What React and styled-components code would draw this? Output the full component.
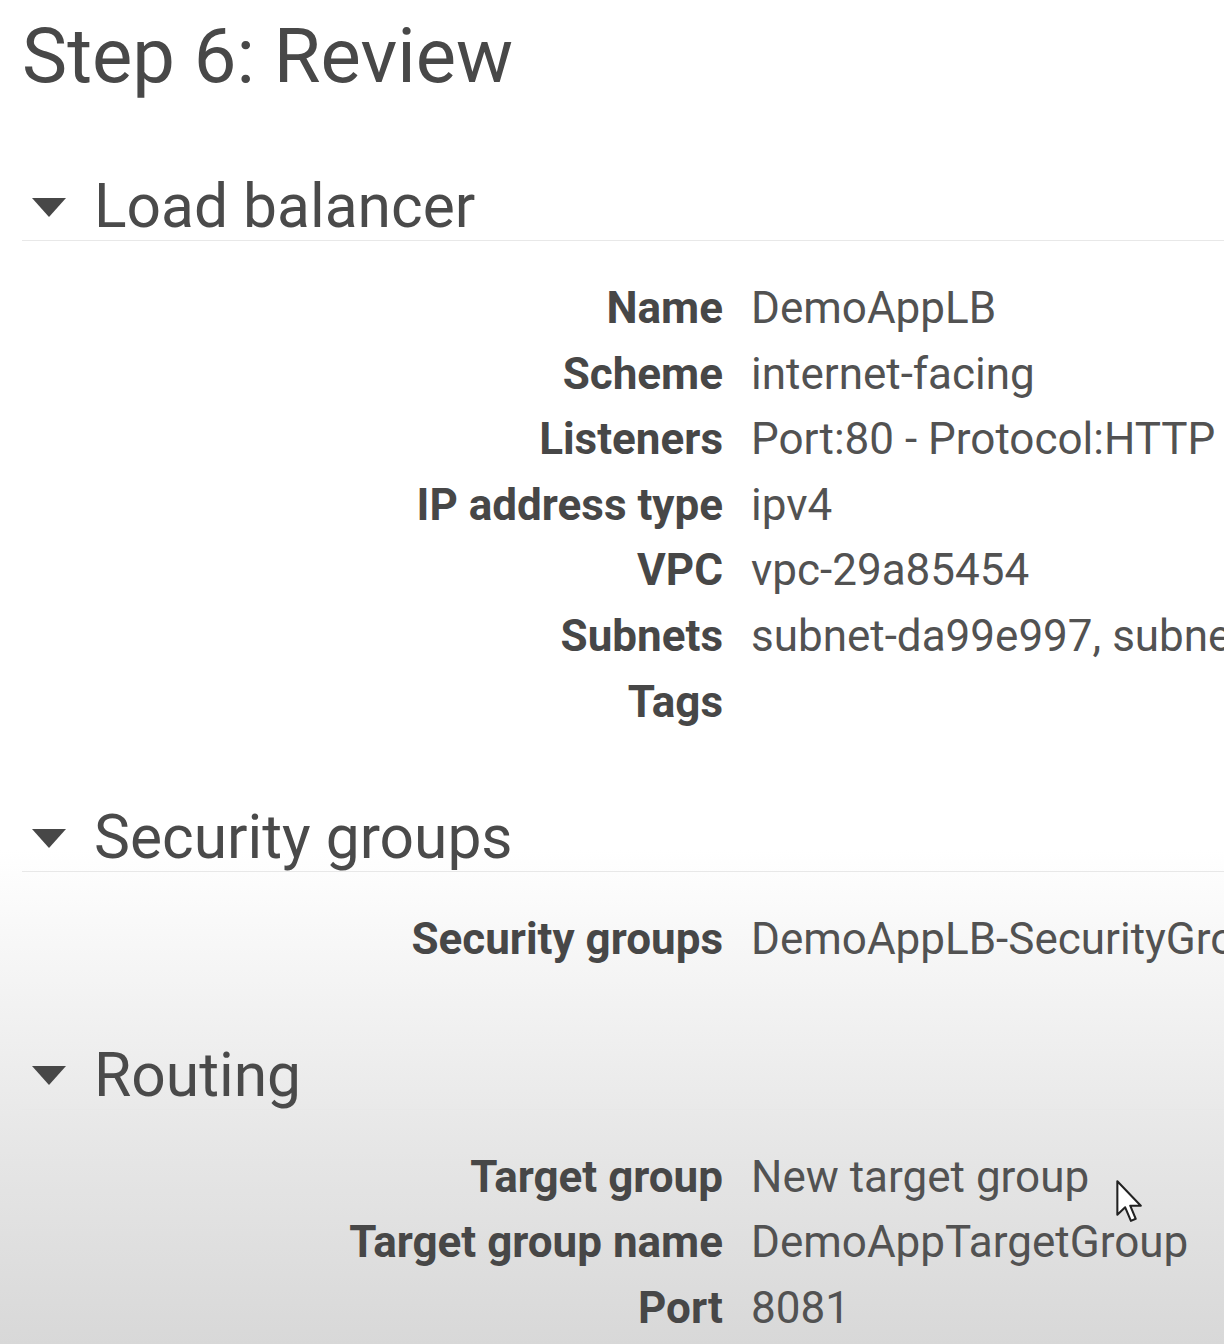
import React from 'react';
import styled, { createGlobalStyle } from 'styled-components';

const GlobalStyle = createGlobalStyle`
  html, body {
    margin: 0;
    padding: 0;
    overflow: hidden;
  }
  body {
    font-family: Roboto, "Liberation Sans", Arial, sans-serif;
    color: #474747;
    background: linear-gradient(
      to bottom,
      #ffffff 0px,
      #ffffff 850px,
      #f4f4f4 980px,
      #e6e6e6 1150px,
      #d8d8d8 1344px
    );
    min-height: 1344px;
  }
`;

const Page = styled.div`
  position: relative;
  width: 1224px;
  height: 1344px;
  padding: 11px 0 0 22px;
  box-sizing: border-box;
  overflow: hidden;
`;

const Title = styled.h1`
  margin: 0 0 73px;
  font-size: 76px;
  line-height: 90px;
  font-weight: 400;
  color: #484848;
  white-space: nowrap;
`;

const Section = styled.section`
  & + & {
    margin-top: 70px;
  }
`;

const SectionHeader = styled.div`
  display: flex;
  align-items: center;
  gap: 28px;
  padding-left: 10px;
  height: 66px;
  border-bottom: 1px solid #e8e8e8;
  margin-right: -22px;
`;

const Caret = styled.span`
  width: 0;
  height: 0;
  border-left: 17px solid transparent;
  border-right: 17px solid transparent;
  border-top: 19px solid #474747;
`;

const SectionTitle = styled.h2`
  margin: 0;
  font-size: 60.5px;
  line-height: 66px;
  font-weight: 400;
  color: #4a4a4a;
  white-space: nowrap;
`;

const Details = styled.dl`
  display: grid;
  grid-template-columns: 701px 1fr;
  column-gap: 28px;
  margin: 35px 0 0;
  font-size: 44px;
  line-height: 65.6px;
`;

const Label = styled.dt`
  margin: 0;
  text-align: right;
  font-weight: 700;
  color: #474747;
  white-space: nowrap;
`;

const Value = styled.dd`
  margin: 0;
  color: #525252;
  white-space: nowrap;
`;

const Cursor = styled.svg`
  position: absolute;
  left: 1115px;
  top: 1179px;
  width: 30px;
  height: 46px;
`;

const sections = [
  {
    title: 'Load balancer',
    rows: [
      ['Name', 'DemoAppLB'],
      ['Scheme', 'internet-facing'],
      ['Listeners', 'Port:80 - Protocol:HTTP'],
      ['IP address type', 'ipv4'],
      ['VPC', 'vpc-29a85454'],
      ['Subnets', 'subnet-da99e997, subnet-c7a1e2bd'],
      ['Tags', ''],
    ],
  },
  {
    title: 'Security groups',
    rows: [['Security groups', 'DemoAppLB-SecurityGroup']],
  },
  {
    title: 'Routing',
    rows: [
      ['Target group', 'New target group'],
      ['Target group name', 'DemoAppTargetGroup'],
      ['Port', '8081'],
    ],
  },
];

const App = () => (
  <>
    <GlobalStyle />
    <Page>
      <Title>Step 6: Review</Title>
      {sections.map((section) => (
        <Section key={section.title}>
          <SectionHeader>
            <Caret />
            <SectionTitle>{section.title}</SectionTitle>
          </SectionHeader>
          <Details>
            {section.rows.map(([label, value]) => (
              <React.Fragment key={label}>
                <Label>{label}</Label>
                <Value>{value}</Value>
              </React.Fragment>
            ))}
          </Details>
        </Section>
      ))}
      <Cursor viewBox="0 0 13 20">
        <path
          d="M1 1 L1 15.5 L4.4 12.3 L6.9 18.2 L9 17.3 L6.6 11.6 L11.2 11.6 Z"
          fill="#fff"
          stroke="#222"
          strokeWidth="0.9"
          strokeLinejoin="round"
        />
      </Cursor>
    </Page>
  </>
);

export default App;
